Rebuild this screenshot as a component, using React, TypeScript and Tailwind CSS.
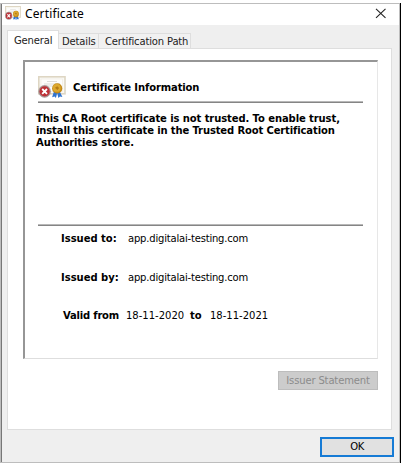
import React from "react";

const verdana = "font-['DejaVu_Sans',Verdana,sans-serif]";

function CertIcon({ className }: { className: string }) {
  return (
    <svg className={className} viewBox="0 0 28 22" preserveAspectRatio="none">
      <rect x="0.8" y="0.8" width="26.2" height="17" fill="#faf9f5" stroke="#ded6c3" strokeWidth="1.6" />
      <rect x="3" y="3" width="21.5" height="12.5" fill="#fdfdfc" stroke="#efece2" strokeWidth="0.7" />
      <path d="M9 5.5h10M6 8h16M7 10h13" stroke="#d5d4d1" strokeWidth="0.8" />
      <path d="M16.1 15l-2 6.3 2.5-.7 1.3 1.3 1.5-5.4zM21.5 15l2.9 5.9-2.4-.3-1.6 1.3-1.4-5.4z" fill="#2f73cf" />
      <circle cx="19.2" cy="12.4" r="5.1" fill="#c48a17" />
      <circle cx="18.8" cy="11.9" r="3.9" fill="#dda92f" />
      <path d="M17 11.8l2.2-1.6 1.9 1.8-1.7 1.9z" fill="#b47b14" />
      <circle cx="6.6" cy="15.4" r="6.3" fill="#a99b9b" />
      <circle cx="6.6" cy="15.4" r="5.1" fill="#bd3036" />
      <path d="M4.2 13l4.8 4.8m0-4.8l-4.8 4.8" stroke="#fff" strokeWidth="1.8" />
    </svg>
  );
}

function Rule() {
  return <div className="ml-[13px] h-[2px] w-[325px] shrink-0 border-t border-[#b8b8b8] bg-[#858585]" />;
}

function Issue({ label, value, height }: { label: string; value: string; height: string }) {
  return (
    <div className={`${height} flex pl-[36px] leading-[12px]`}>
      <b className="w-[67px] tracking-[-0.02px]">{label}</b>
      <span className="tracking-[-0.19px]">{value}</span>
    </div>
  );
}

export default function App() {
  return (
    <div className={`${verdana} flex h-[464px] w-[401px] flex-col overflow-hidden whitespace-nowrap bg-white pt-[3px] text-[10px] text-black`}>
      <div className="flex h-[460px] border-r border-black">
        <div className="flex w-[400px] flex-col border-y border-l border-r border-[#bdbdbd]">
          <div className="flex min-h-0 flex-1 flex-col border-l border-[#777] bg-[#efefef]">
            <header className="flex h-[21px] shrink-0 items-start bg-white">
              <CertIcon className="ml-[3px] mt-[2px] h-[14px] w-[16px]" />
              <h1 className="ml-[4px] mt-[2px] w-[350px] font-['Noto_Sans','Open_Sans',sans-serif] text-[12px] leading-[16px] tracking-[0.13px]">Certificate</h1>
              <svg className="mt-[4px] h-[11px] w-[12px]" viewBox="0 0 12 11">
                <path d="M1 .8l9.5 9M10.5 .8L1 9.8" stroke="#222" strokeWidth="1.1" />
              </svg>
            </header>
            <nav className="mt-[5px] flex h-[18px] shrink-0 items-end pl-[5px] tracking-[-0.16px] text-[#222]">
              <div className="relative z-10 -mb-px h-[19px] w-[52px] border border-b-0 border-[#dedede] bg-white pl-[6px] pt-[3px] leading-[13px]">General</div>
              <div className="h-[15px] w-[40px] border-r border-t border-[#dedede] bg-[#f1f1f1] pl-[3px] pt-px leading-[13px]">Details</div>
              <div className="h-[15px] w-[92px] border-r border-t border-[#dedede] bg-[#f1f1f1] pl-[6px] pt-px leading-[13px]">Certification Path</div>
            </nav>
            <main className="ml-[5px] flex h-[382px] w-[385px] shrink-0 flex-col border border-[#dedede] bg-white">
              <section className="ml-[15px] mt-[11px] h-[299px] w-[355px] shrink-0 border-b border-l-2 border-r border-t-2 border-b-[#dedede] border-l-[#969696] border-r-[#e7e7e7] border-t-[#969696]">
                <div className="flex h-[39px] pl-[13px] pt-[14px]">
                  <CertIcon className="h-[22px] w-[28px] shrink-0" />
                  <b className="ml-[7px] mt-[6px] leading-[12px] tracking-[-0.12px]">Certificate Information</b>
                </div>
                <Rule />
                <p className="h-[121px] pl-[11px] pt-[10px] font-bold leading-[12px] tracking-[-0.09px]">
                  This CA Root certificate is not trusted. To enable trust,<br />
                  <span className="tracking-[-0.13px]">install this certificate in the Trusted Root Certification</span><br />
                  Authorities store.
                </p>
                <Rule />
                <div className="pt-[7px]">
                  <Issue label="Issued to:" value="app.digitalai-testing.com" height="h-[39px]" />
                  <Issue label="Issued by:" value="app.digitalai-testing.com" height="h-[38px]" />
                  <div className="flex pl-[38px] leading-[12px]">
                    <b className="w-[63px] tracking-[-0.2px]">Valid from</b>
                    <span className="w-[64px]">18-11-2020</span>
                    <b className="w-[20px]">to</b>
                    <span>18-11-2021</span>
                  </div>
                </div>
              </section>
              <button disabled className="ml-[270px] mt-[12px] h-[19px] w-[100px] shrink-0 border border-[#bdbdbd] bg-[#ccc] leading-[17px] tracking-[-0.15px] text-[#8b8b8b]">Issuer Statement</button>
            </main>
            <button className="ml-[318px] mt-[7px] h-[20px] w-[74px] shrink-0 border-2 border-[#167bd5] bg-[#e1e1e1] text-center leading-[16px] tracking-[-0.4px]">OK</button>
          </div>
        </div>
      </div>
    </div>
  );
}
